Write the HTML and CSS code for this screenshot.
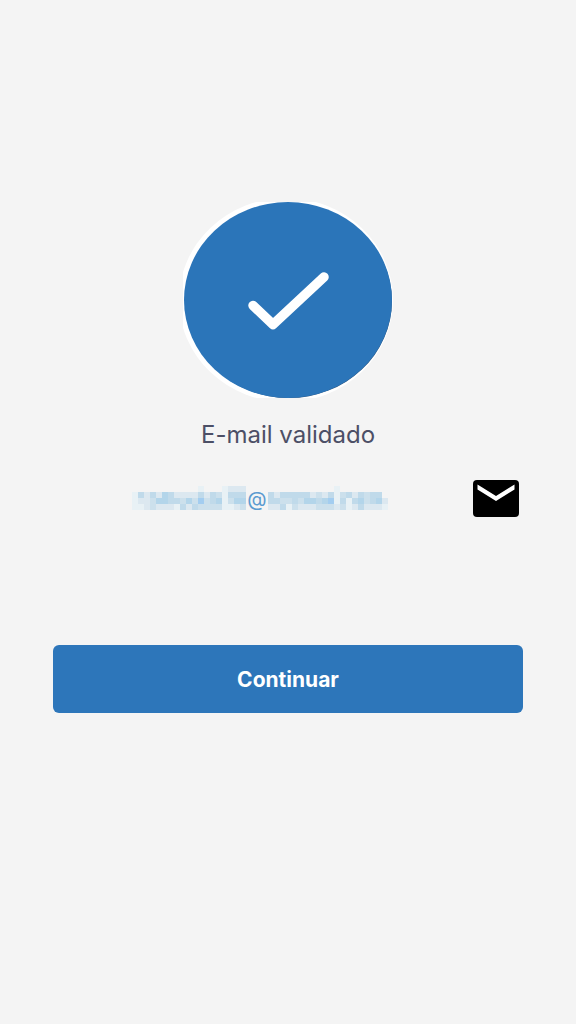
FILE: index.html
```html
<!DOCTYPE html>
<html lang="pt-BR">
<head>
<meta charset="utf-8">
<meta name="viewport" content="width=device-width, initial-scale=1">
<title>E-mail validado</title>
<link rel="stylesheet" href="styles.css">
</head>
<body>
<main class="screen">
  <svg class="badge" viewBox="0 0 210 196" aria-hidden="true">
    <ellipse cx="103" cy="98" rx="107" ry="102" fill="#fff"/>
    <ellipse cx="106" cy="99" rx="103" ry="97" fill="#31577f"/>
    <ellipse cx="105" cy="98" rx="104" ry="98" fill="#2b75b9"/>
    <path d="M70 103.500L90 122.500L141 75" fill="none" stroke="#fff" stroke-width="9.500" stroke-linecap="round" stroke-linejoin="round"/>
  </svg>
  <h1 class="title">E-mail validado</h1>
  <div class="email-row">
    <p class="email" aria-label="E-mail oculto">
      <svg class="mosaic" data-rows="0000000000010001222 1424254222242431444 1223554435363451355 1123222142433331123" aria-hidden="true"></svg>
      <span class="at">@</span>
      <svg class="mosaic" data-rows="00000000000100000000 42444442324134243440 44334355456141453452 22413222333231242221" aria-hidden="true"></svg>
    </p>
    <svg class="envelope" viewBox="0 0 46 37" aria-hidden="true">
      <rect width="46" height="37" rx="4"/>
      <path d="M4.500 4.500L23 16L41.500 4.500V9.500L23 21L4.500 9.500Z" fill="#fff"/>
    </svg>
  </div>
  <button class="continue" type="button">Continuar</button>
</main>
<script src="mosaic.js"></script>
</body>
</html>
```
FILE: mosaic.js
```js
// Fills each masked half of the address with 6px tiles, one digit per tile shade.
const shades = ["none", "#e8f1f5", "#dce8f0", "#cce0ec", "#c0daea", "#b3d5ea", "#a3cdf0"];
document.querySelectorAll(".mosaic").forEach((svg) => {
  const rows = svg.dataset.rows.split(" ");
  svg.setAttribute("width", rows[0].length * 6);
  svg.setAttribute("height", rows.length * 6);
  rows.forEach((row, y) => {
    [...row].forEach((shade, x) => {
      const tile = document.createElementNS("http://www.w3.org/2000/svg", "rect");
      tile.setAttribute("x", x * 6);
      tile.setAttribute("y", y * 6);
      tile.setAttribute("width", 6);
      tile.setAttribute("height", 6);
      tile.setAttribute("fill", shades[Number(shade)]);
      svg.append(tile);
    });
  });
});
```
FILE: styles.css
```css
* {
  box-sizing: border-box;
}

body {
  margin: 0;
  background: #f4f4f4;
  font-family: Inter, "Liberation Sans", sans-serif;
}

.screen {
  display: flex;
  flex-direction: column;
  align-items: center;
  min-height: 100vh;
  padding: 202px 53px 40px;
}

.badge {
  width: 210px;
  height: 196px;
}

.title {
  margin: 21px 0 0;
  color: #4c4f66;
  font-size: 24px;
  font-weight: 400;
  line-height: 32px;
}

.email-row {
  display: flex;
  align-items: center;
  align-self: stretch;
  margin-top: 29px;
  padding-right: 4px;
}

.email {
  display: flex;
  flex: 1;
  align-items: center;
  justify-content: center;
  height: 37px;
  margin: 0;
  padding-right: 6px;
}

.mosaic {
  flex: none;
  margin-bottom: 1px;
}

.at {
  width: 22px;
  color: #5b9bd0;
  font-size: 20px;
  line-height: 24px;
  text-align: center;
}

.envelope {
  width: 46px;
  height: 37px;
}

.continue {
  align-self: stretch;
  height: 68px;
  margin-top: 128px;
  border: 0;
  border-radius: 6px;
  background: #2d76ba;
  color: #fff;
  font-family: inherit;
  font-size: 21px;
  font-weight: 700;
  cursor: pointer;
}
```
